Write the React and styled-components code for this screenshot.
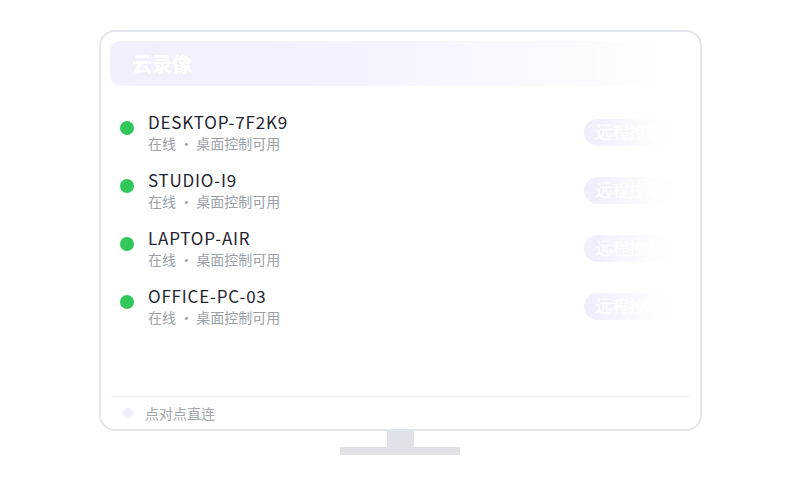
import React from 'react';
import styled, { createGlobalStyle } from 'styled-components';

const GlobalStyle = createGlobalStyle`
  html, body {
    margin: 0;
    padding: 0;
    background: #fff;
  }
  body {
    font-family: "Noto Sans CJK SC", "Noto Sans", sans-serif;
  }
`;

const devices = [
  { name: 'DESKTOP-7F2K9', status: '在线 · 桌面控制可用' },
  { name: 'STUDIO-I9', status: '在线 · 桌面控制可用' },
  { name: 'LAPTOP-AIR', status: '在线 · 桌面控制可用' },
  { name: 'OFFICE-PC-03', status: '在线 · 桌面控制可用' },
];

function App() {
  return (
    <Page>
      <GlobalStyle />
      <Monitor>
        <Faded>
          <Header>
            <h1>云录像</h1>
            <HeaderTools>
              <span>•••</span>
              <Bar />
            </HeaderTools>
          </Header>
          <List>
            {devices.map((d) => (
              <Row key={d.name}>
                <Dot />
                <Info>
                  <Name>{d.name}</Name>
                  <Status>{d.status}</Status>
                </Info>
                <ControlButton>远程控制</ControlButton>
              </Row>
            ))}
          </List>
        </Faded>
        <Footer>
          <Dot small color="#efecfd" />
          <span>点对点直连</span>
        </Footer>
      </Monitor>
      <Neck />
      <Base />
    </Page>
  );
}

const Page = styled.div`
  width: 800px;
  height: 500px;
  padding-top: 30px;
  box-sizing: border-box;
  display: flex;
  flex-direction: column;
  align-items: center;
`;

const Monitor = styled.div`
  width: 603px;
  height: 401px;
  box-sizing: border-box;
  border: 2px solid #e3e6ea;
  border-radius: 16px;
  background: #fff;
  padding: 9px 9px 6px;
  display: flex;
  flex-direction: column;
  margin-left: 1px;
`;

const Faded = styled.div`
  position: relative;
  flex: 1;
  display: flex;
  flex-direction: column;

  &::after {
    content: '';
    position: absolute;
    inset: 0;
    pointer-events: none;
    background: linear-gradient(
      90deg,
      rgba(255, 255, 255, 0) 0%,
      rgba(255, 255, 255, 0) 82%,
      rgba(255, 255, 255, 0.9) 94%,
      #fff 100%
    );
  }
`;

const Header = styled.div`
  height: 45px;
  border-radius: 10px;
  background: linear-gradient(90deg, #f2effe 0%, #f5f2ff 40%, #faf8ff 70%, #fdfcff 100%);
  display: flex;
  align-items: center;
  justify-content: space-between;
  padding: 0 0 0 22px;

  h1 {
    margin: 0;
    font-size: 20px;
    font-weight: 700;
    color: #fff;
    line-height: 1;
  }
`;

const HeaderTools = styled.div`
  display: flex;
  align-items: center;
  gap: 28px;
  color: #fff;
  font-size: 14px;
  opacity: 0.7;
`;

const Bar = styled.i`
  width: 2px;
  height: 20px;
  background: #f4f2fb;
`;

const List = styled.div`
  padding: 25px 10px 0 10px;
  display: flex;
  flex-direction: column;
  gap: 15px;
`;

const Row = styled.div`
  display: flex;
  align-items: flex-start;
`;

const Dot = styled.span`
  flex: none;
  width: ${(p) => (p.small ? 10 : 14)}px;
  height: ${(p) => (p.small ? 10 : 14)}px;
  border-radius: 50%;
  background: ${(p) => p.color || '#31c75a'};
  margin-top: ${(p) => (p.small ? 0 : 10)}px;
`;

const Info = styled.div`
  flex: 1;
  margin-left: 14px;
  display: flex;
  flex-direction: column;
`;

const Name = styled.div`
  font-size: 17px;
  line-height: 22px;
  color: #1f2430;
  letter-spacing: 0.8px;
`;

const Status = styled.div`
  font-size: 14px;
  line-height: 21px;
  color: #9ba1ab;
`;

const ControlButton = styled.button`
  align-self: center;
  margin-right: 7px;
  height: 27px;
  padding: 0 11px;
  border: none;
  border-radius: 14px;
  background: #f0edfd;
  color: #fff;
  font-family: "Liberation Serif", serif;
  font-size: 17px;
  line-height: 27px;
`;

const Footer = styled.div`
  border-top: 1px solid #eef0f4;
  margin: 0 1px;
  padding: 6px 12px 0;
  height: 20px;
  display: flex;
  align-items: center;
  gap: 12px;
  font-size: 14px;
  line-height: 20px;
  color: #a0a5ae;
`;

const Neck = styled.div`
  width: 27px;
  height: 16px;
  background: #dfe3e8;
  margin-left: 1px;
`;

const Base = styled.div`
  width: 120px;
  height: 8px;
  background: #dfe3e8;
`;

export default App;
